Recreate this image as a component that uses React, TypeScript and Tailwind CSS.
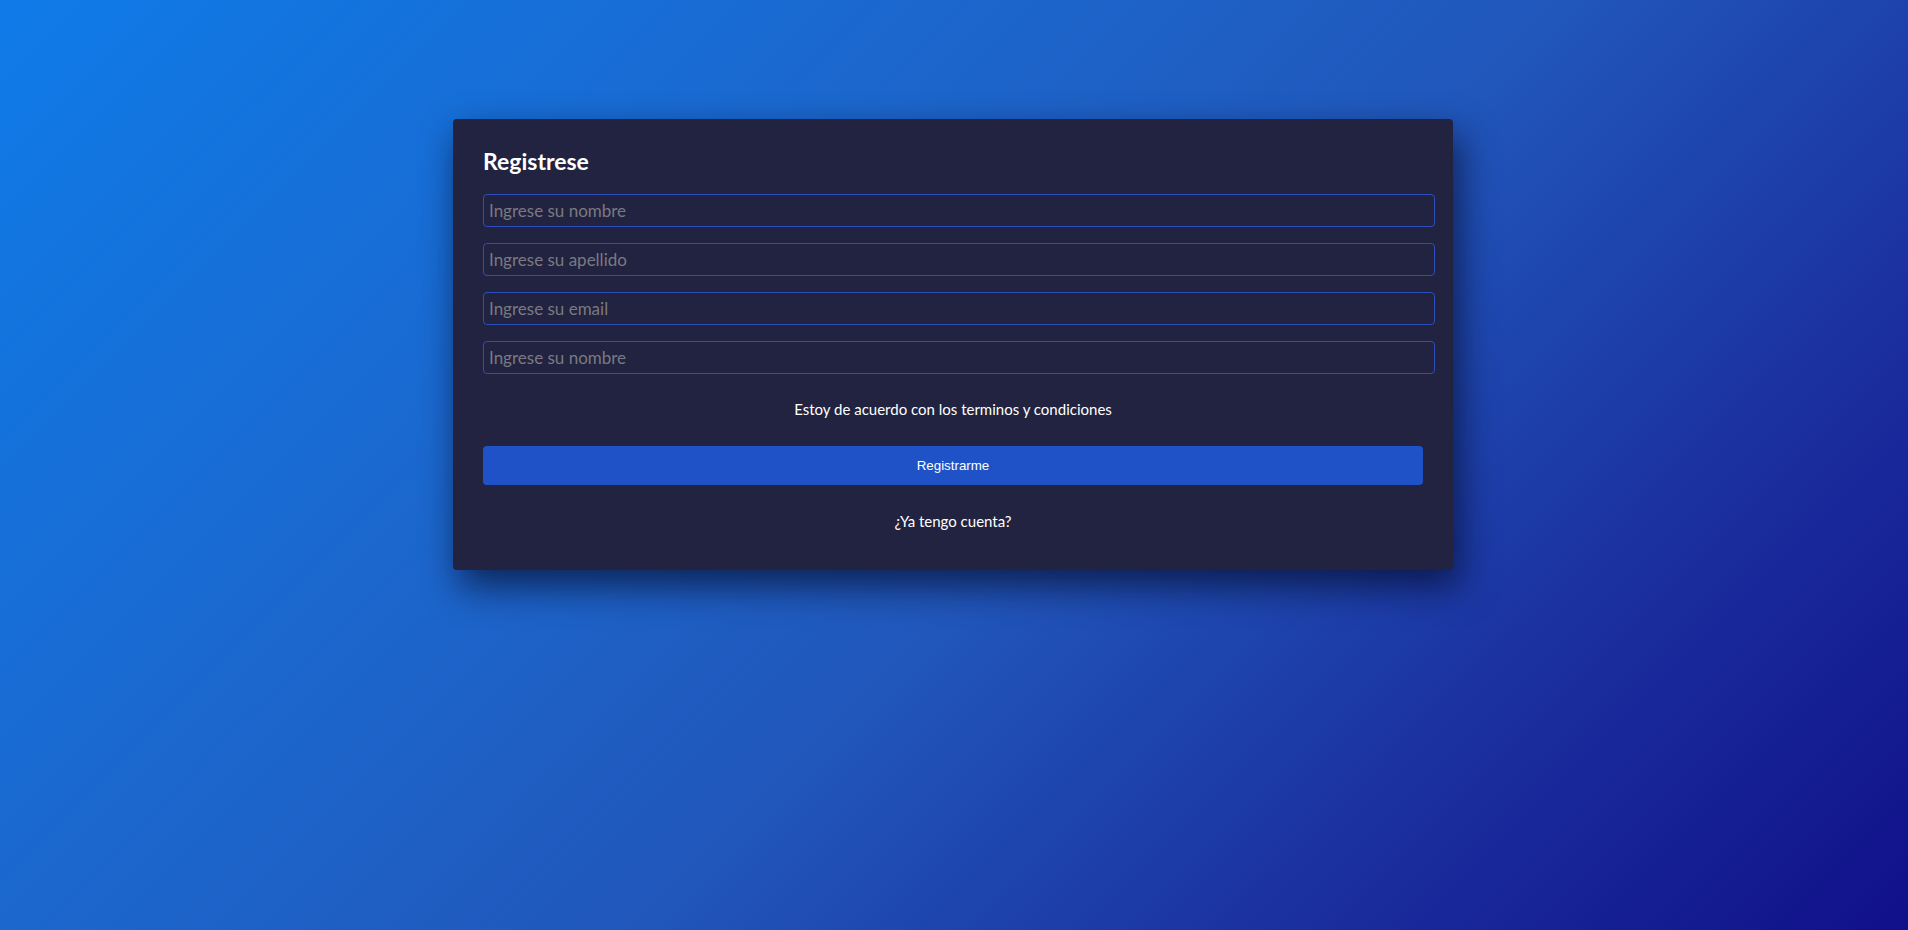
export default function App() {
  const fields = [
    "Ingrese su nombre",
    "Ingrese su apellido",
    "Ingrese su email",
    "Ingrese su nombre",
  ]

  return (
    <div className="min-h-screen w-full bg-[linear-gradient(135deg,#0f7be8_0%,#1c66cc_35%,#2157bb_55%,#1a2c9c_80%,#10108a_100%)] pt-[119px] font-['Lato','Open_Sans',sans-serif]">
      <div className="ml-[453px] w-[1000px] rounded-[4px] bg-[#212340] px-[30px] pt-[28px] pb-[36px] shadow-[6px_16px_36px_rgba(5,10,40,0.7)]">
        <h1 className="text-[23px] leading-[28px] font-bold text-white">Registrese</h1>

        <form className="mt-[19px] flex flex-col gap-[16px]" onSubmit={(e) => e.preventDefault()}>
          {fields.map((placeholder, i) => (
            <input
              key={i}
              type={i === 2 ? "email" : "text"}
              placeholder={placeholder}
              className="box-content block h-[31px] w-[calc(100%-2px)] rounded-[4px] border border-[#2c4fbb] bg-[#212340] pl-[5px] pr-[7px] py-0 text-[17px] text-white outline-none placeholder:text-[#7a7a82]"
            />
          ))}
        </form>

        <p className="mt-[23px] text-center text-[15px] leading-[24px] text-white">
          Estoy de acuerdo con los terminos y condiciones
        </p>

        <button className="mt-[25px] block h-[39px] w-full rounded-[4px] bg-[#1f52c6] font-['Liberation_Sans',Arial,sans-serif] text-[13.33px] text-white">
          Registrarme
        </button>

        <p className="mt-[24px] mb-[1px] text-center text-[15px] leading-[24px] text-white">¿Ya tengo cuenta?</p>
      </div>
    </div>
  )
}
